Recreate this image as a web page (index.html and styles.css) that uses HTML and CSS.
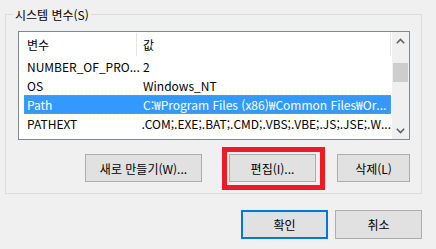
FILE: index.html
```html
<!DOCTYPE html>
<html lang="ko">
<head>
  <meta charset="UTF-8" />
  <title>환경 변수</title>
  <link rel="stylesheet" href="styles.css">
</head>
<body>

<div class="dialog">
  <!-- System variables group -->
  <fieldset class="group">
    <legend>시스템 변수(S)</legend>

    <div class="listview">
      <div class="list-main">
        <div class="list-header">
          <div class="col col-name">변수</div>
          <div class="col col-value">값</div>
        </div>
        <div class="list-rows">
          <div class="row"><span class="cell name">NUMBER_OF_PRO...</span><span class="cell value">2</span></div>
          <div class="row"><span class="cell name">OS</span><span class="cell value">Windows_NT</span></div>
          <div class="row selected"><span class="cell name">Path</span><span class="cell value">C:₩Program Files (x86)₩Common Files₩Or...</span></div>
          <div class="row"><span class="cell name">PATHEXT</span><span class="cell value">.COM;.EXE;.BAT;.CMD;.VBS;.VBE;.JS;.JSE;.W...</span></div>
        </div>
      </div>
      <div class="scrollbar">
        <div class="arrow">
          <svg width="9" height="6" viewBox="0 0 9 6"><polyline points="0.8,5.2 4.5,1.5 8.2,5.2" fill="none" stroke="#606060" stroke-width="1.6"/></svg>
        </div>
        <div class="track"><div class="thumb"></div></div>
        <div class="arrow">
          <svg width="9" height="6" viewBox="0 0 9 6"><polyline points="0.8,0.8 4.5,4.5 8.2,0.8" fill="none" stroke="#606060" stroke-width="1.6"/></svg>
        </div>
      </div>
    </div>

    <div class="group-buttons">
      <button class="btn btn-new">새로 만들기(W)...</button>
      <div class="marked">
        <button class="btn btn-edit">편집(I)...</button>
        <div class="mark"></div>
      </div>
      <button class="btn btn-delete">삭제(L)</button>
    </div>
  </fieldset>

  <!-- Dialog buttons -->
  <div class="dialog-buttons">
    <button class="btn btn-ok">확인</button>
    <button class="btn btn-cancel">취소</button>
  </div>
</div>

</body>
</html>
```

FILE: styles.css
```css
* { margin: 0; padding: 0; box-sizing: border-box; }
html, body {
  height: 100%;
  background: #f0f0f0;
  font-family: "Noto Sans CJK KR", sans-serif;
  font-size: 12px;
  color: #000;
  overflow: hidden;
}

.dialog {
  padding: 6px 0 0 5px;
}

.group {
  width: 417px;
  border: 1px solid #dcdcdc;
  padding: 8px 11px 11px 12px;
}

.group legend {
  height: 17px;
  line-height: 17px;
  padding: 0 2px;
  margin-left: -5px;
}

/* list view */
.listview {
  display: flex;
  width: 392px;
  height: 109px;
  border: 1px solid #828790;
  background: #fff;
}

.list-main {
  width: 373px;
  overflow: hidden;
}

.list-header {
  display: flex;
  height: 25px;
  line-height: 23px;
}

.col {
  border-right: 1px solid #e5e5e5;
  margin: 1px 0;
}

.col-name {
  width: 118px;
  padding-left: 8px;
}

.col-value {
  width: 254px;
  padding-left: 6px;
}

.list-rows {
  padding-left: 5px;
}

.row {
  display: flex;
  width: 367px;
  height: 19px;
  line-height: 19px;
  white-space: nowrap;
}

.row .name {
  width: 113px;
  padding-left: 3px;
}

.row .value {
  padding-left: 6px;
}

.row.selected {
  background: #3399ff;
  color: #fff;
  outline: 1px dotted #d9822b;
  outline-offset: -1px;
}

/* scroll bar */
.scrollbar {
  width: 17px;
  background: #f0f0f0;
  display: flex;
  flex-direction: column;
}

.arrow {
  height: 17px;
  display: flex;
  align-items: center;
  justify-content: center;
}

.track {
  flex: 1;
  padding: 14px 1px 0 1px;
}

.thumb {
  height: 19px;
  background: #cdcdcd;
}

/* buttons */
.btn {
  font: inherit;
  color: #000;
  height: 28px;
  background: #e1e1e1;
  border: 1px solid #adadad;
  text-align: center;
  white-space: nowrap;
}

.group-buttons {
  display: flex;
  margin-top: 14px;
}

.btn-new {
  width: 117px;
  margin-left: 67px;
}

.marked {
  position: relative;
  margin-left: 27px;
}

.btn-edit {
  width: 87px;
  display: block;
}

.mark {
  position: absolute;
  top: -7px;
  left: -7px;
  right: -9px;
  bottom: -8px;
  border: 5px solid #ed1c24;
}

.btn-delete {
  width: 73px;
  margin-left: 21px;
}

.dialog-buttons {
  display: flex;
  justify-content: flex-end;
  gap: 7px;
  width: 417px;
  margin-top: 16px;
}

.dialog-buttons .btn {
  width: 87px;
  height: 29px;
}

.btn-ok {
  border: 2px solid #0078d7;
}
```
